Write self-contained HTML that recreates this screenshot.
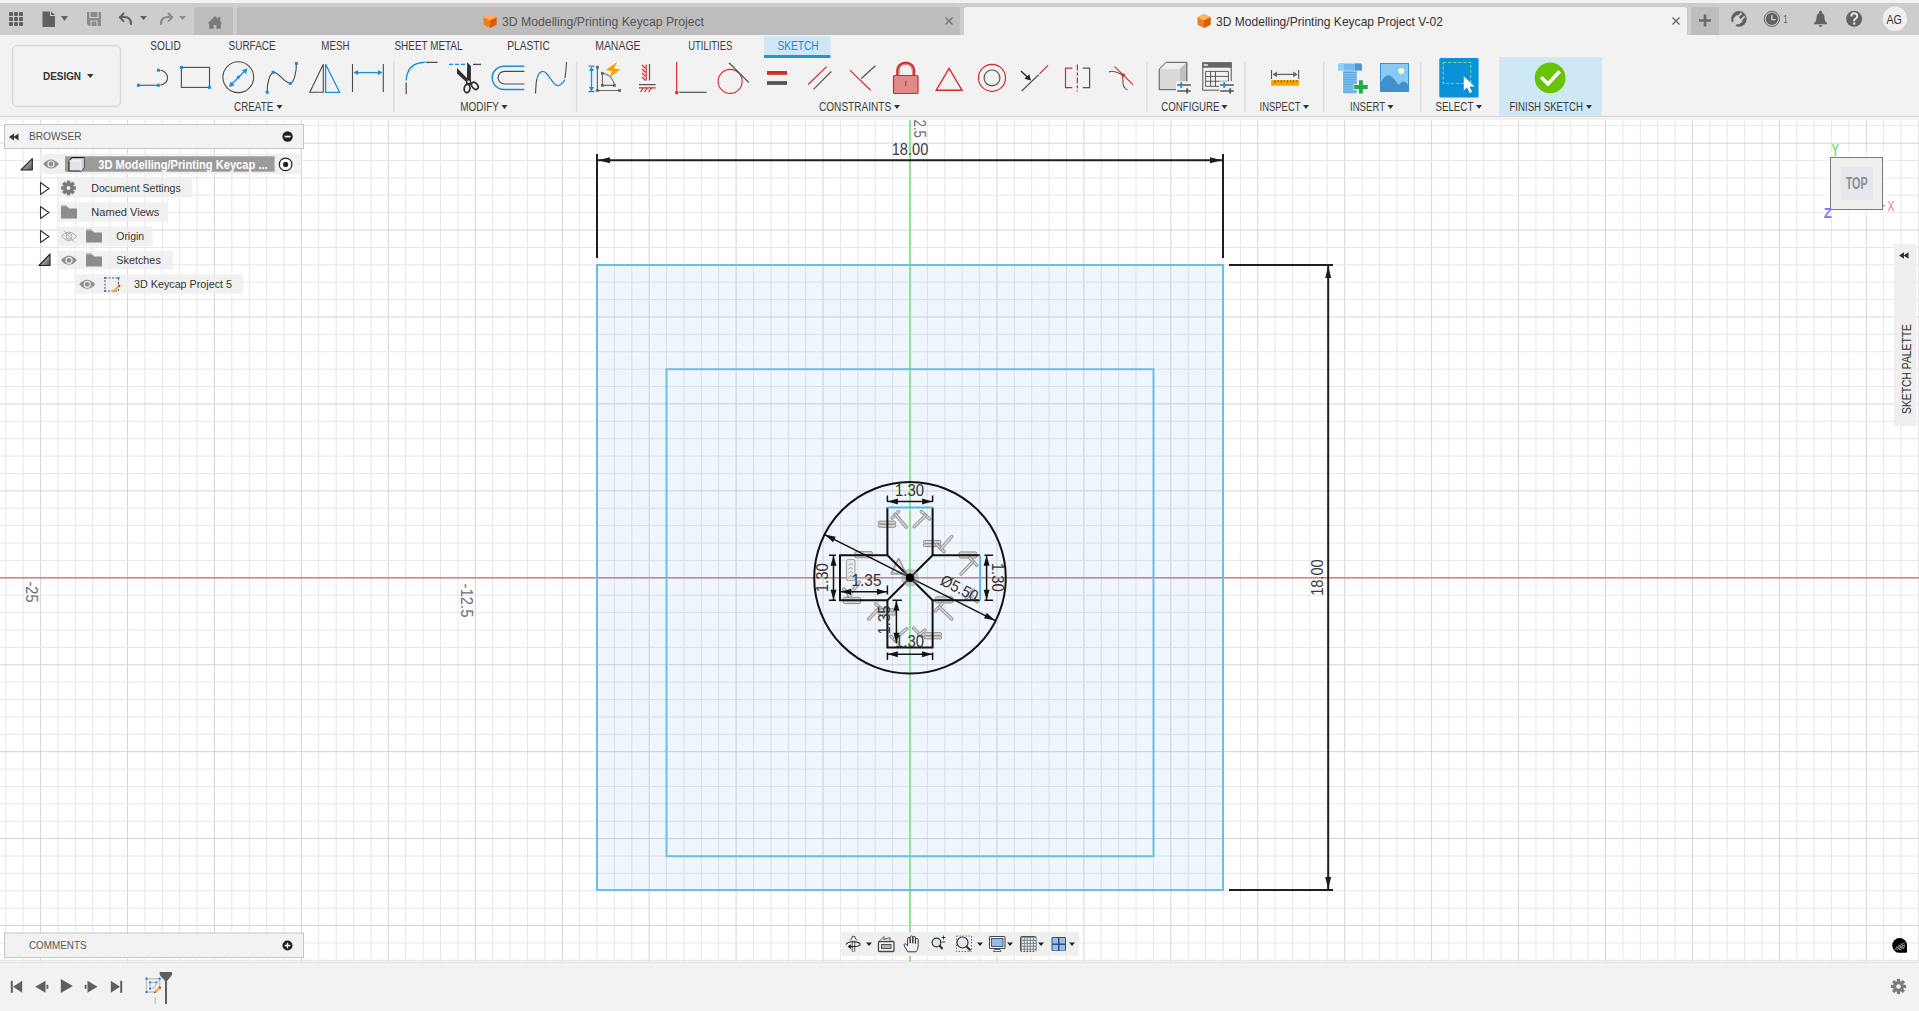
<!DOCTYPE html>
<html><head><meta charset="utf-8"><title>Fusion 360 - Sketch</title>
<style>html,body{margin:0;padding:0;width:1919px;height:1011px;overflow:hidden;background:#fff;font-family:'Liberation Sans', sans-serif}</style>
</head><body>
<svg width="1919" height="1011" viewBox="0 0 1919 1011" style="position:absolute;left:0;top:0;font-family:'Liberation Sans', sans-serif"><rect x="0" y="120" width="1919" height="842" fill="#ffffff"/>
<g><line x1="5.82" y1="120" x2="5.82" y2="962" stroke="#e6e6e6" stroke-width="1"/><line x1="23.21" y1="120" x2="23.21" y2="962" stroke="#e6e6e6" stroke-width="1"/><line x1="40.60" y1="120" x2="40.60" y2="962" stroke="#d4d4d4" stroke-width="1"/><line x1="57.99" y1="120" x2="57.99" y2="962" stroke="#e6e6e6" stroke-width="1"/><line x1="75.38" y1="120" x2="75.38" y2="962" stroke="#e6e6e6" stroke-width="1"/><line x1="92.76" y1="120" x2="92.76" y2="962" stroke="#e6e6e6" stroke-width="1"/><line x1="110.15" y1="120" x2="110.15" y2="962" stroke="#e6e6e6" stroke-width="1"/><line x1="127.54" y1="120" x2="127.54" y2="962" stroke="#d4d4d4" stroke-width="1"/><line x1="144.93" y1="120" x2="144.93" y2="962" stroke="#e6e6e6" stroke-width="1"/><line x1="162.32" y1="120" x2="162.32" y2="962" stroke="#e6e6e6" stroke-width="1"/><line x1="179.70" y1="120" x2="179.70" y2="962" stroke="#e6e6e6" stroke-width="1"/><line x1="197.09" y1="120" x2="197.09" y2="962" stroke="#e6e6e6" stroke-width="1"/><line x1="214.48" y1="120" x2="214.48" y2="962" stroke="#d4d4d4" stroke-width="1"/><line x1="231.87" y1="120" x2="231.87" y2="962" stroke="#e6e6e6" stroke-width="1"/><line x1="249.26" y1="120" x2="249.26" y2="962" stroke="#e6e6e6" stroke-width="1"/><line x1="266.64" y1="120" x2="266.64" y2="962" stroke="#e6e6e6" stroke-width="1"/><line x1="284.03" y1="120" x2="284.03" y2="962" stroke="#e6e6e6" stroke-width="1"/><line x1="301.42" y1="120" x2="301.42" y2="962" stroke="#d4d4d4" stroke-width="1"/><line x1="318.81" y1="120" x2="318.81" y2="962" stroke="#e6e6e6" stroke-width="1"/><line x1="336.20" y1="120" x2="336.20" y2="962" stroke="#e6e6e6" stroke-width="1"/><line x1="353.58" y1="120" x2="353.58" y2="962" stroke="#e6e6e6" stroke-width="1"/><line x1="370.97" y1="120" x2="370.97" y2="962" stroke="#e6e6e6" stroke-width="1"/><line x1="388.36" y1="120" x2="388.36" y2="962" stroke="#d4d4d4" stroke-width="1"/><line x1="405.75" y1="120" x2="405.75" y2="962" stroke="#e6e6e6" stroke-width="1"/><line x1="423.14" y1="120" x2="423.14" y2="962" stroke="#e6e6e6" stroke-width="1"/><line x1="440.52" y1="120" x2="440.52" y2="962" stroke="#e6e6e6" stroke-width="1"/><line x1="457.91" y1="120" x2="457.91" y2="962" stroke="#e6e6e6" stroke-width="1"/><line x1="475.30" y1="120" x2="475.30" y2="962" stroke="#d4d4d4" stroke-width="1"/><line x1="492.69" y1="120" x2="492.69" y2="962" stroke="#e6e6e6" stroke-width="1"/><line x1="510.08" y1="120" x2="510.08" y2="962" stroke="#e6e6e6" stroke-width="1"/><line x1="527.46" y1="120" x2="527.46" y2="962" stroke="#e6e6e6" stroke-width="1"/><line x1="544.85" y1="120" x2="544.85" y2="962" stroke="#e6e6e6" stroke-width="1"/><line x1="562.24" y1="120" x2="562.24" y2="962" stroke="#d4d4d4" stroke-width="1"/><line x1="579.63" y1="120" x2="579.63" y2="962" stroke="#e6e6e6" stroke-width="1"/><line x1="597.02" y1="120" x2="597.02" y2="962" stroke="#e6e6e6" stroke-width="1"/><line x1="614.40" y1="120" x2="614.40" y2="962" stroke="#e6e6e6" stroke-width="1"/><line x1="631.79" y1="120" x2="631.79" y2="962" stroke="#e6e6e6" stroke-width="1"/><line x1="649.18" y1="120" x2="649.18" y2="962" stroke="#d4d4d4" stroke-width="1"/><line x1="666.57" y1="120" x2="666.57" y2="962" stroke="#e6e6e6" stroke-width="1"/><line x1="683.96" y1="120" x2="683.96" y2="962" stroke="#e6e6e6" stroke-width="1"/><line x1="701.34" y1="120" x2="701.34" y2="962" stroke="#e6e6e6" stroke-width="1"/><line x1="718.73" y1="120" x2="718.73" y2="962" stroke="#e6e6e6" stroke-width="1"/><line x1="736.12" y1="120" x2="736.12" y2="962" stroke="#d4d4d4" stroke-width="1"/><line x1="753.51" y1="120" x2="753.51" y2="962" stroke="#e6e6e6" stroke-width="1"/><line x1="770.90" y1="120" x2="770.90" y2="962" stroke="#e6e6e6" stroke-width="1"/><line x1="788.28" y1="120" x2="788.28" y2="962" stroke="#e6e6e6" stroke-width="1"/><line x1="805.67" y1="120" x2="805.67" y2="962" stroke="#e6e6e6" stroke-width="1"/><line x1="823.06" y1="120" x2="823.06" y2="962" stroke="#d4d4d4" stroke-width="1"/><line x1="840.45" y1="120" x2="840.45" y2="962" stroke="#e6e6e6" stroke-width="1"/><line x1="857.84" y1="120" x2="857.84" y2="962" stroke="#e6e6e6" stroke-width="1"/><line x1="875.22" y1="120" x2="875.22" y2="962" stroke="#e6e6e6" stroke-width="1"/><line x1="892.61" y1="120" x2="892.61" y2="962" stroke="#e6e6e6" stroke-width="1"/><line x1="910.00" y1="120" x2="910.00" y2="962" stroke="#d4d4d4" stroke-width="1"/><line x1="927.39" y1="120" x2="927.39" y2="962" stroke="#e6e6e6" stroke-width="1"/><line x1="944.78" y1="120" x2="944.78" y2="962" stroke="#e6e6e6" stroke-width="1"/><line x1="962.16" y1="120" x2="962.16" y2="962" stroke="#e6e6e6" stroke-width="1"/><line x1="979.55" y1="120" x2="979.55" y2="962" stroke="#e6e6e6" stroke-width="1"/><line x1="996.94" y1="120" x2="996.94" y2="962" stroke="#d4d4d4" stroke-width="1"/><line x1="1014.33" y1="120" x2="1014.33" y2="962" stroke="#e6e6e6" stroke-width="1"/><line x1="1031.72" y1="120" x2="1031.72" y2="962" stroke="#e6e6e6" stroke-width="1"/><line x1="1049.10" y1="120" x2="1049.10" y2="962" stroke="#e6e6e6" stroke-width="1"/><line x1="1066.49" y1="120" x2="1066.49" y2="962" stroke="#e6e6e6" stroke-width="1"/><line x1="1083.88" y1="120" x2="1083.88" y2="962" stroke="#d4d4d4" stroke-width="1"/><line x1="1101.27" y1="120" x2="1101.27" y2="962" stroke="#e6e6e6" stroke-width="1"/><line x1="1118.66" y1="120" x2="1118.66" y2="962" stroke="#e6e6e6" stroke-width="1"/><line x1="1136.04" y1="120" x2="1136.04" y2="962" stroke="#e6e6e6" stroke-width="1"/><line x1="1153.43" y1="120" x2="1153.43" y2="962" stroke="#e6e6e6" stroke-width="1"/><line x1="1170.82" y1="120" x2="1170.82" y2="962" stroke="#d4d4d4" stroke-width="1"/><line x1="1188.21" y1="120" x2="1188.21" y2="962" stroke="#e6e6e6" stroke-width="1"/><line x1="1205.60" y1="120" x2="1205.60" y2="962" stroke="#e6e6e6" stroke-width="1"/><line x1="1222.98" y1="120" x2="1222.98" y2="962" stroke="#e6e6e6" stroke-width="1"/><line x1="1240.37" y1="120" x2="1240.37" y2="962" stroke="#e6e6e6" stroke-width="1"/><line x1="1257.76" y1="120" x2="1257.76" y2="962" stroke="#d4d4d4" stroke-width="1"/><line x1="1275.15" y1="120" x2="1275.15" y2="962" stroke="#e6e6e6" stroke-width="1"/><line x1="1292.54" y1="120" x2="1292.54" y2="962" stroke="#e6e6e6" stroke-width="1"/><line x1="1309.92" y1="120" x2="1309.92" y2="962" stroke="#e6e6e6" stroke-width="1"/><line x1="1327.31" y1="120" x2="1327.31" y2="962" stroke="#e6e6e6" stroke-width="1"/><line x1="1344.70" y1="120" x2="1344.70" y2="962" stroke="#d4d4d4" stroke-width="1"/><line x1="1362.09" y1="120" x2="1362.09" y2="962" stroke="#e6e6e6" stroke-width="1"/><line x1="1379.48" y1="120" x2="1379.48" y2="962" stroke="#e6e6e6" stroke-width="1"/><line x1="1396.86" y1="120" x2="1396.86" y2="962" stroke="#e6e6e6" stroke-width="1"/><line x1="1414.25" y1="120" x2="1414.25" y2="962" stroke="#e6e6e6" stroke-width="1"/><line x1="1431.64" y1="120" x2="1431.64" y2="962" stroke="#d4d4d4" stroke-width="1"/><line x1="1449.03" y1="120" x2="1449.03" y2="962" stroke="#e6e6e6" stroke-width="1"/><line x1="1466.42" y1="120" x2="1466.42" y2="962" stroke="#e6e6e6" stroke-width="1"/><line x1="1483.80" y1="120" x2="1483.80" y2="962" stroke="#e6e6e6" stroke-width="1"/><line x1="1501.19" y1="120" x2="1501.19" y2="962" stroke="#e6e6e6" stroke-width="1"/><line x1="1518.58" y1="120" x2="1518.58" y2="962" stroke="#d4d4d4" stroke-width="1"/><line x1="1535.97" y1="120" x2="1535.97" y2="962" stroke="#e6e6e6" stroke-width="1"/><line x1="1553.36" y1="120" x2="1553.36" y2="962" stroke="#e6e6e6" stroke-width="1"/><line x1="1570.74" y1="120" x2="1570.74" y2="962" stroke="#e6e6e6" stroke-width="1"/><line x1="1588.13" y1="120" x2="1588.13" y2="962" stroke="#e6e6e6" stroke-width="1"/><line x1="1605.52" y1="120" x2="1605.52" y2="962" stroke="#d4d4d4" stroke-width="1"/><line x1="1622.91" y1="120" x2="1622.91" y2="962" stroke="#e6e6e6" stroke-width="1"/><line x1="1640.30" y1="120" x2="1640.30" y2="962" stroke="#e6e6e6" stroke-width="1"/><line x1="1657.68" y1="120" x2="1657.68" y2="962" stroke="#e6e6e6" stroke-width="1"/><line x1="1675.07" y1="120" x2="1675.07" y2="962" stroke="#e6e6e6" stroke-width="1"/><line x1="1692.46" y1="120" x2="1692.46" y2="962" stroke="#d4d4d4" stroke-width="1"/><line x1="1709.85" y1="120" x2="1709.85" y2="962" stroke="#e6e6e6" stroke-width="1"/><line x1="1727.24" y1="120" x2="1727.24" y2="962" stroke="#e6e6e6" stroke-width="1"/><line x1="1744.62" y1="120" x2="1744.62" y2="962" stroke="#e6e6e6" stroke-width="1"/><line x1="1762.01" y1="120" x2="1762.01" y2="962" stroke="#e6e6e6" stroke-width="1"/><line x1="1779.40" y1="120" x2="1779.40" y2="962" stroke="#d4d4d4" stroke-width="1"/><line x1="1796.79" y1="120" x2="1796.79" y2="962" stroke="#e6e6e6" stroke-width="1"/><line x1="1814.18" y1="120" x2="1814.18" y2="962" stroke="#e6e6e6" stroke-width="1"/><line x1="1831.56" y1="120" x2="1831.56" y2="962" stroke="#e6e6e6" stroke-width="1"/><line x1="1848.95" y1="120" x2="1848.95" y2="962" stroke="#e6e6e6" stroke-width="1"/><line x1="1866.34" y1="120" x2="1866.34" y2="962" stroke="#d4d4d4" stroke-width="1"/><line x1="1883.73" y1="120" x2="1883.73" y2="962" stroke="#e6e6e6" stroke-width="1"/><line x1="1901.12" y1="120" x2="1901.12" y2="962" stroke="#e6e6e6" stroke-width="1"/><line x1="1918.50" y1="120" x2="1918.50" y2="962" stroke="#e6e6e6" stroke-width="1"/><line x1="0" y1="125.71" x2="1919" y2="125.71" stroke="#e6e6e6" stroke-width="1"/><line x1="0" y1="143.10" x2="1919" y2="143.10" stroke="#d4d4d4" stroke-width="1"/><line x1="0" y1="160.49" x2="1919" y2="160.49" stroke="#e6e6e6" stroke-width="1"/><line x1="0" y1="177.88" x2="1919" y2="177.88" stroke="#e6e6e6" stroke-width="1"/><line x1="0" y1="195.26" x2="1919" y2="195.26" stroke="#e6e6e6" stroke-width="1"/><line x1="0" y1="212.65" x2="1919" y2="212.65" stroke="#e6e6e6" stroke-width="1"/><line x1="0" y1="230.04" x2="1919" y2="230.04" stroke="#d4d4d4" stroke-width="1"/><line x1="0" y1="247.43" x2="1919" y2="247.43" stroke="#e6e6e6" stroke-width="1"/><line x1="0" y1="264.82" x2="1919" y2="264.82" stroke="#e6e6e6" stroke-width="1"/><line x1="0" y1="282.20" x2="1919" y2="282.20" stroke="#e6e6e6" stroke-width="1"/><line x1="0" y1="299.59" x2="1919" y2="299.59" stroke="#e6e6e6" stroke-width="1"/><line x1="0" y1="316.98" x2="1919" y2="316.98" stroke="#d4d4d4" stroke-width="1"/><line x1="0" y1="334.37" x2="1919" y2="334.37" stroke="#e6e6e6" stroke-width="1"/><line x1="0" y1="351.76" x2="1919" y2="351.76" stroke="#e6e6e6" stroke-width="1"/><line x1="0" y1="369.14" x2="1919" y2="369.14" stroke="#e6e6e6" stroke-width="1"/><line x1="0" y1="386.53" x2="1919" y2="386.53" stroke="#e6e6e6" stroke-width="1"/><line x1="0" y1="403.92" x2="1919" y2="403.92" stroke="#d4d4d4" stroke-width="1"/><line x1="0" y1="421.31" x2="1919" y2="421.31" stroke="#e6e6e6" stroke-width="1"/><line x1="0" y1="438.70" x2="1919" y2="438.70" stroke="#e6e6e6" stroke-width="1"/><line x1="0" y1="456.08" x2="1919" y2="456.08" stroke="#e6e6e6" stroke-width="1"/><line x1="0" y1="473.47" x2="1919" y2="473.47" stroke="#e6e6e6" stroke-width="1"/><line x1="0" y1="490.86" x2="1919" y2="490.86" stroke="#d4d4d4" stroke-width="1"/><line x1="0" y1="508.25" x2="1919" y2="508.25" stroke="#e6e6e6" stroke-width="1"/><line x1="0" y1="525.64" x2="1919" y2="525.64" stroke="#e6e6e6" stroke-width="1"/><line x1="0" y1="543.02" x2="1919" y2="543.02" stroke="#e6e6e6" stroke-width="1"/><line x1="0" y1="560.41" x2="1919" y2="560.41" stroke="#e6e6e6" stroke-width="1"/><line x1="0" y1="577.80" x2="1919" y2="577.80" stroke="#d4d4d4" stroke-width="1"/><line x1="0" y1="595.19" x2="1919" y2="595.19" stroke="#e6e6e6" stroke-width="1"/><line x1="0" y1="612.58" x2="1919" y2="612.58" stroke="#e6e6e6" stroke-width="1"/><line x1="0" y1="629.96" x2="1919" y2="629.96" stroke="#e6e6e6" stroke-width="1"/><line x1="0" y1="647.35" x2="1919" y2="647.35" stroke="#e6e6e6" stroke-width="1"/><line x1="0" y1="664.74" x2="1919" y2="664.74" stroke="#d4d4d4" stroke-width="1"/><line x1="0" y1="682.13" x2="1919" y2="682.13" stroke="#e6e6e6" stroke-width="1"/><line x1="0" y1="699.52" x2="1919" y2="699.52" stroke="#e6e6e6" stroke-width="1"/><line x1="0" y1="716.90" x2="1919" y2="716.90" stroke="#e6e6e6" stroke-width="1"/><line x1="0" y1="734.29" x2="1919" y2="734.29" stroke="#e6e6e6" stroke-width="1"/><line x1="0" y1="751.68" x2="1919" y2="751.68" stroke="#d4d4d4" stroke-width="1"/><line x1="0" y1="769.07" x2="1919" y2="769.07" stroke="#e6e6e6" stroke-width="1"/><line x1="0" y1="786.46" x2="1919" y2="786.46" stroke="#e6e6e6" stroke-width="1"/><line x1="0" y1="803.84" x2="1919" y2="803.84" stroke="#e6e6e6" stroke-width="1"/><line x1="0" y1="821.23" x2="1919" y2="821.23" stroke="#e6e6e6" stroke-width="1"/><line x1="0" y1="838.62" x2="1919" y2="838.62" stroke="#d4d4d4" stroke-width="1"/><line x1="0" y1="856.01" x2="1919" y2="856.01" stroke="#e6e6e6" stroke-width="1"/><line x1="0" y1="873.40" x2="1919" y2="873.40" stroke="#e6e6e6" stroke-width="1"/><line x1="0" y1="890.78" x2="1919" y2="890.78" stroke="#e6e6e6" stroke-width="1"/><line x1="0" y1="908.17" x2="1919" y2="908.17" stroke="#e6e6e6" stroke-width="1"/><line x1="0" y1="925.56" x2="1919" y2="925.56" stroke="#d4d4d4" stroke-width="1"/><line x1="0" y1="942.95" x2="1919" y2="942.95" stroke="#e6e6e6" stroke-width="1"/><line x1="0" y1="960.34" x2="1919" y2="960.34" stroke="#e6e6e6" stroke-width="1"/></g>
<line x1="0" y1="577.8" x2="1919" y2="577.8" stroke="#e27a7a" stroke-width="1.6"/>
<rect x="597" y="265" width="626" height="625" fill="rgb(80,160,230)" fill-opacity="0.09"/>
<line x1="910.0" y1="120" x2="910.0" y2="962" stroke="#90e393" stroke-width="2"/>
<rect x="597" y="265" width="626" height="625" fill="none" stroke="#6ebde6" stroke-width="2"/>
<rect x="666.5" y="369.2" width="487" height="487" fill="none" stroke="#6ebde6" stroke-width="2"/>
<path d="M597,154 V258 M1223,154 V258 M597,160.2 H1223" stroke="#1e1e1e" stroke-width="2" fill="none"/>
<path d="M598.00,160.20 L610.00,157.20 L610.00,163.20 Z" fill="#1e1e1e"/>
<path d="M1222.00,160.20 L1210.00,163.20 L1210.00,157.20 Z" fill="#1e1e1e"/>
<text x="910" y="154.6" font-size="16" fill="#3a3a3a" font-weight="normal" text-anchor="middle" textLength="36.5" lengthAdjust="spacingAndGlyphs" >18.00</text>
<path d="M1229,265 H1333 M1229,890 H1333 M1328.2,265 V890" stroke="#1e1e1e" stroke-width="2" fill="none"/>
<path d="M1328.20,266.00 L1331.20,278.00 L1325.20,278.00 Z" fill="#1e1e1e"/>
<path d="M1328.20,889.00 L1325.20,877.00 L1331.20,877.00 Z" fill="#1e1e1e"/>
<text x="0" y="0" font-size="16" fill="#3a3a3a" font-weight="normal" text-anchor="middle" textLength="36.5" lengthAdjust="spacingAndGlyphs" transform="translate(1322.5,577.6) rotate(-90)">18.00</text>
<text x="0" y="0" font-size="16.5" fill="#6e6e6e" font-weight="normal" text-anchor="start" textLength="21" lengthAdjust="spacingAndGlyphs" transform="translate(26,581.5) rotate(90)">-25</text>
<text x="0" y="0" font-size="16" fill="#6e6e6e" font-weight="normal" text-anchor="start" textLength="34" lengthAdjust="spacingAndGlyphs" transform="translate(461,583.5) rotate(90)">-12.5</text>
<text x="0" y="0" font-size="16" fill="#6e6e6e" font-weight="normal" text-anchor="start" textLength="18.5" lengthAdjust="spacingAndGlyphs" transform="translate(914,119.5) rotate(90)">2.5</text>
<rect x="878.35" y="521.1" width="17.5" height="3.0" rx="1.3" fill="#d2d2d2" stroke="#8e8e8e" stroke-width="1"/>
<rect x="878.35" y="524.3000000000001" width="17.5" height="3.0" rx="1.3" fill="#d2d2d2" stroke="#8e8e8e" stroke-width="1"/>
<path d="M892,518 L898.6,511.5" stroke="#969696" stroke-width="3.4" stroke-linecap="round"/>
<path d="M892,518 L898.6,511.5" stroke="#dedede" stroke-width="1.3" stroke-linecap="round"/>
<path d="M895.3,514.2 L906.2,527.2" stroke="#969696" stroke-width="3.4" stroke-linecap="round"/>
<path d="M895.3,514.2 L906.2,527.2" stroke="#dedede" stroke-width="1.3" stroke-linecap="round"/>
<path d="M921.3,511.5 L929.5,519.1" stroke="#969696" stroke-width="3.4" stroke-linecap="round"/>
<path d="M921.3,511.5 L929.5,519.1" stroke="#dedede" stroke-width="1.3" stroke-linecap="round"/>
<path d="M925.7,515.3 L914.2,526.7" stroke="#969696" stroke-width="3.4" stroke-linecap="round"/>
<path d="M925.7,515.3 L914.2,526.7" stroke="#dedede" stroke-width="1.3" stroke-linecap="round"/>
<rect x="923.45" y="540.4" width="17.5" height="3.0" rx="1.3" fill="#d2d2d2" stroke="#8e8e8e" stroke-width="1"/>
<rect x="923.45" y="543.6" width="17.5" height="3.0" rx="1.3" fill="#d2d2d2" stroke="#8e8e8e" stroke-width="1"/>
<path d="M936.6,544.6 L944.2,551.7" stroke="#969696" stroke-width="3.4" stroke-linecap="round"/>
<path d="M936.6,544.6 L944.2,551.7" stroke="#dedede" stroke-width="1.3" stroke-linecap="round"/>
<path d="M940.9,549 L951.8,536.5" stroke="#969696" stroke-width="3.4" stroke-linecap="round"/>
<path d="M940.9,549 L951.8,536.5" stroke="#dedede" stroke-width="1.3" stroke-linecap="round"/>
<rect x="959.15" y="551.9" width="17.5" height="3.0" rx="1.3" fill="#d2d2d2" stroke="#8e8e8e" stroke-width="1"/>
<rect x="959.15" y="555.1" width="17.5" height="3.0" rx="1.3" fill="#d2d2d2" stroke="#8e8e8e" stroke-width="1"/>
<path d="M969.7,557.7 L976.8,565.3" stroke="#969696" stroke-width="3.4" stroke-linecap="round"/>
<path d="M969.7,557.7 L976.8,565.3" stroke="#dedede" stroke-width="1.3" stroke-linecap="round"/>
<path d="M972.5,562 L961,574" stroke="#969696" stroke-width="3.4" stroke-linecap="round"/>
<path d="M972.5,562 L961,574" stroke="#dedede" stroke-width="1.3" stroke-linecap="round"/>
<rect x="854.95" y="551.6" width="17.5" height="3.0" rx="1.3" fill="#d2d2d2" stroke="#8e8e8e" stroke-width="1"/>
<rect x="854.95" y="554.8000000000001" width="17.5" height="3.0" rx="1.3" fill="#d2d2d2" stroke="#8e8e8e" stroke-width="1"/>
<rect x="846.5" y="559.5" width="8.5" height="21" rx="2" fill="#e4e4e4" fill-opacity="0.6" stroke="#a6a6a6" stroke-width="1.1"/>
<path d="M848.5,565 Q850.8,562 853,565" fill="none" stroke="#a6a6a6" stroke-width="1"/>
<path d="M848.5,569 Q850.8,566 853,569" fill="none" stroke="#a6a6a6" stroke-width="1"/>
<path d="M848.5,573 Q850.8,570 853,573" fill="none" stroke="#a6a6a6" stroke-width="1"/>
<path d="M848.5,577 Q850.8,574 853,577" fill="none" stroke="#a6a6a6" stroke-width="1"/>
<path d="M898.6,559 L891.5,573.5 H905.5 Z" fill="none" stroke="#a6a6a6" stroke-width="2.6" stroke-linejoin="round"/><path d="M898.6,561 L893.5,572 H903.5 Z" fill="none" stroke="#e4e4e4" stroke-width="1"/>
<rect x="843.25" y="597.4" width="17.5" height="3.0" rx="1.3" fill="#d2d2d2" stroke="#8e8e8e" stroke-width="1"/>
<rect x="843.25" y="600.6" width="17.5" height="3.0" rx="1.3" fill="#d2d2d2" stroke="#8e8e8e" stroke-width="1"/>
<path d="M848.5,596.1 L859.4,582" stroke="#969696" stroke-width="3.4" stroke-linecap="round"/>
<path d="M848.5,596.1 L859.4,582" stroke="#dedede" stroke-width="1.3" stroke-linecap="round"/>
<path d="M843.6,589 L850.7,596.7" stroke="#969696" stroke-width="3.4" stroke-linecap="round"/>
<path d="M843.6,589 L850.7,596.7" stroke="#dedede" stroke-width="1.3" stroke-linecap="round"/>
<path d="M875.7,603.7 L883.3,610.8" stroke="#969696" stroke-width="3.4" stroke-linecap="round"/>
<path d="M875.7,603.7 L883.3,610.8" stroke="#dedede" stroke-width="1.3" stroke-linecap="round"/>
<path d="M880,607.5 L868.7,619" stroke="#969696" stroke-width="3.4" stroke-linecap="round"/>
<path d="M880,607.5 L868.7,619" stroke="#dedede" stroke-width="1.3" stroke-linecap="round"/>
<rect x="878.45" y="608.8" width="17.5" height="3.0" rx="1.3" fill="#d2d2d2" stroke="#8e8e8e" stroke-width="1"/>
<rect x="878.45" y="612.0" width="17.5" height="3.0" rx="1.3" fill="#d2d2d2" stroke="#8e8e8e" stroke-width="1"/>
<path d="M891,636.4 L897.5,642.9" stroke="#969696" stroke-width="3.4" stroke-linecap="round"/>
<path d="M891,636.4 L897.5,642.9" stroke="#dedede" stroke-width="1.3" stroke-linecap="round"/>
<path d="M894.2,639.6 L906.7,628.8" stroke="#969696" stroke-width="3.4" stroke-linecap="round"/>
<path d="M894.2,639.6 L906.7,628.8" stroke="#dedede" stroke-width="1.3" stroke-linecap="round"/>
<rect x="935.45" y="596.8" width="17.5" height="3.0" rx="1.3" fill="#d2d2d2" stroke="#8e8e8e" stroke-width="1"/>
<rect x="935.45" y="600.0" width="17.5" height="3.0" rx="1.3" fill="#d2d2d2" stroke="#8e8e8e" stroke-width="1"/>
<path d="M935.5,610.8 L942.5,603.2" stroke="#969696" stroke-width="3.4" stroke-linecap="round"/>
<path d="M935.5,610.8 L942.5,603.2" stroke="#dedede" stroke-width="1.3" stroke-linecap="round"/>
<path d="M939.3,607 L951.8,619" stroke="#969696" stroke-width="3.4" stroke-linecap="round"/>
<path d="M939.3,607 L951.8,619" stroke="#dedede" stroke-width="1.3" stroke-linecap="round"/>
<rect x="924.05" y="632.6999999999999" width="17.5" height="3.0" rx="1.3" fill="#d2d2d2" stroke="#8e8e8e" stroke-width="1"/>
<rect x="924.05" y="635.9" width="17.5" height="3.0" rx="1.3" fill="#d2d2d2" stroke="#8e8e8e" stroke-width="1"/>
<path d="M913.6,628.2 L921.8,636.4" stroke="#969696" stroke-width="3.4" stroke-linecap="round"/>
<path d="M913.6,628.2 L921.8,636.4" stroke="#dedede" stroke-width="1.3" stroke-linecap="round"/>
<path d="M918.5,635.5 L925,630" stroke="#969696" stroke-width="3.4" stroke-linecap="round"/>
<path d="M918.5,635.5 L925,630" stroke="#dedede" stroke-width="1.3" stroke-linecap="round"/>
<path d="M970,594 L977,602" stroke="#969696" stroke-width="3.4" stroke-linecap="round"/>
<path d="M970,594 L977,602" stroke="#dedede" stroke-width="1.3" stroke-linecap="round"/>
<path d="M966,598 L973.5,590" stroke="#969696" stroke-width="3.4" stroke-linecap="round"/>
<path d="M966,598 L973.5,590" stroke="#dedede" stroke-width="1.3" stroke-linecap="round"/>
<circle cx="910.0" cy="577.8" r="95.8" fill="none" stroke="#121212" stroke-width="2"/>
<path d="M887.4,555.2 V507.6 M932.6,507.6 V555.2 H980.1 M980.1,600.3 H932.6 V647.5 H887.4 V600.3 H840 V555.2 H887.4" fill="none" stroke="#121212" stroke-width="2" stroke-linejoin="miter"/>
<path d="M887.4,507.6 H932.6 M980.1,555.2 V600.3" fill="none" stroke="#5ab8ea" stroke-width="2"/>
<path d="M887.4,555.2 L932.6,600.3 M932.6,555.2 L887.4,600.3" stroke="#121212" stroke-width="2"/>
<path d="M887.4,495.5 V502 M932.6,495.5 V502 M887.4,501.4 H932.6" fill="none" stroke="#121212" stroke-width="1.5"/>
<path d="M887.90,501.40 L897.90,498.40 L897.90,504.40 Z" fill="#121212"/>
<path d="M932.10,501.40 L922.10,504.40 L922.10,498.40 Z" fill="#121212"/>
<text x="909.5" y="495.5" font-size="16" fill="#333" font-weight="normal" text-anchor="middle" textLength="29" lengthAdjust="spacingAndGlyphs" >1.30</text>
<path d="M887.4,652.5 V660 M932.6,652.5 V660 M887.4,654.3 H932.6" fill="none" stroke="#121212" stroke-width="1.5"/>
<path d="M887.90,654.30 L897.90,651.30 L897.90,657.30 Z" fill="#121212"/>
<path d="M932.10,654.30 L922.10,657.30 L922.10,651.30 Z" fill="#121212"/>
<text x="909.5" y="647.4" font-size="16" fill="#333" font-weight="normal" text-anchor="middle" textLength="29" lengthAdjust="spacingAndGlyphs" >1.30</text>
<path d="M829,555.2 H836 M829,600.3 H836 M833.5,555.2 V600.3" fill="none" stroke="#121212" stroke-width="1.5"/>
<path d="M833.50,555.70 L836.50,565.70 L830.50,565.70 Z" fill="#121212"/>
<path d="M833.50,599.80 L830.50,589.80 L836.50,589.80 Z" fill="#121212"/>
<text x="0" y="0" font-size="16" fill="#333" font-weight="normal" text-anchor="middle" textLength="29" lengthAdjust="spacingAndGlyphs" transform="translate(828,577.8) rotate(-90)">1.30</text>
<path d="M984.5,555.2 H993 M984.5,600.3 H993 M986.6,555.2 V600.3" fill="none" stroke="#121212" stroke-width="1.5"/>
<path d="M986.60,555.70 L989.60,565.70 L983.60,565.70 Z" fill="#121212"/>
<path d="M986.60,599.80 L983.60,589.80 L989.60,589.80 Z" fill="#121212"/>
<text x="0" y="0" font-size="16" fill="#333" font-weight="normal" text-anchor="middle" textLength="29" lengthAdjust="spacingAndGlyphs" transform="translate(991.5,577.3) rotate(90)">1.30</text>
<path d="M887.4,585.5 V594.5 M840.5,591.8 H887.4" fill="none" stroke="#121212" stroke-width="1.5"/>
<path d="M841.00,591.80 L851.00,588.80 L851.00,594.80 Z" fill="#121212"/>
<path d="M886.90,591.80 L876.90,594.80 L876.90,588.80 Z" fill="#121212"/>
<text x="866.5" y="586" font-size="16" fill="#333" font-weight="normal" text-anchor="middle" textLength="30" lengthAdjust="spacingAndGlyphs" >1.35</text>
<path d="M892.5,600.3 H902 M896.4,600.3 V643" fill="none" stroke="#121212" stroke-width="1.5"/>
<path d="M896.40,600.80 L899.40,610.80 L893.40,610.80 Z" fill="#121212"/>
<path d="M896.40,642.80 L893.40,632.80 L899.40,632.80 Z" fill="#121212"/>
<text x="0" y="0" font-size="16" fill="#333" font-weight="normal" text-anchor="middle" textLength="29" lengthAdjust="spacingAndGlyphs" transform="translate(889.8,620) rotate(-90)">1.35</text>
<path d="M824.6,534.6 L995.2,620.6" stroke="#121212" stroke-width="1.5"/>
<path d="M824.60,534.60 L835.77,536.87 L833.07,542.23 Z" fill="#121212"/>
<path d="M995.20,620.60 L984.03,618.33 L986.73,612.97 Z" fill="#121212"/>
<text x="0" y="0" font-size="16" fill="#333" font-weight="normal" text-anchor="middle" textLength="40" lengthAdjust="spacingAndGlyphs" transform="translate(957,593) rotate(26.75)">Ø5.50</text>
<circle cx="910.0" cy="577.8" r="9" fill="#8a8a8a" fill-opacity="0.45"/><circle cx="910.0" cy="577.8" r="4.3" fill="#000"/>
<rect x="0" y="0" width="1919" height="3" fill="#f3f3f3"/>
<rect x="0" y="3" width="1919" height="32" fill="#cdcdcd"/>
<rect x="0" y="35" width="1919" height="81" fill="#f2f2f2"/>
<rect x="0" y="116" width="1919" height="4" fill="#f1f1f1"/><rect x="0" y="115.8" width="1919" height="1.2" fill="#d9d9d9"/>
<rect x="9" y="12" width="4" height="4" rx="0.8" fill="#616161"/>
<rect x="9" y="17" width="4" height="4" rx="0.8" fill="#616161"/>
<rect x="9" y="22" width="4" height="4" rx="0.8" fill="#616161"/>
<rect x="14" y="12" width="4" height="4" rx="0.8" fill="#616161"/>
<rect x="14" y="17" width="4" height="4" rx="0.8" fill="#616161"/>
<rect x="14" y="22" width="4" height="4" rx="0.8" fill="#616161"/>
<rect x="19" y="12" width="4" height="4" rx="0.8" fill="#616161"/>
<rect x="19" y="17" width="4" height="4" rx="0.8" fill="#616161"/>
<rect x="19" y="22" width="4" height="4" rx="0.8" fill="#616161"/>
<path d="M42.5,11.5 H50 V16 H55 V26.5 Q55,27 54.5,27 H43 Q42.5,27 42.5,26.5 Z" fill="#616161"/>
<path d="M51,11.5 L55,15 H51 Z" fill="#616161"/>
<path d="M61,16 H68 L64.5,21 Z" fill="#616161"/>
<path d="M87,12 H101 V26 H89 L87,24 Z" fill="#8a8a8a"/>
<path d="M90,12 V17.5 H98 V12" fill="none" stroke="#cdcdcd" stroke-width="1.2"/>
<path d="M91,26 V21 H97 V26" fill="none" stroke="#cdcdcd" stroke-width="1.2"/>
<path d="M131,24 Q131,17 124,17 H120" fill="none" stroke="#616161" stroke-width="2.2" stroke-linecap="round"/>
<path d="M123.5,13.5 L120,17.5 L123.5,21" fill="none" stroke="#616161" stroke-width="2" stroke-linecap="round" stroke-linejoin="round"/>
<path d="M140,16 H147 L143.5,20 Z" fill="#616161"/>
<path d="M161,24 Q161,17 168,17 H172" fill="none" stroke="#8c8c8c" stroke-width="2.2" stroke-linecap="round"/>
<path d="M168.5,13.5 L172,17.5 L168.5,21" fill="none" stroke="#8c8c8c" stroke-width="2" stroke-linecap="round" stroke-linejoin="round"/>
<path d="M179,16 H186 L182.5,20 Z" fill="#8c8c8c"/>
<path d="M194,35 V10 Q194,7 197,7 H230 Q233,7 233,10 V35 Z" fill="#bdbdbd"/>
<path d="M207.6,23.6 L215,16 L218.2,19.2 V17 H220.2 V21.2 L222.4,23.6 H220.8 V28.8 H216.4 V25 H213.6 V28.8 H209.2 V23.6 Z" fill="#7a7a7a"/>
<path d="M237,35 V10 Q237,7 240,7 H957 Q960,7 960,10 V35 Z" fill="#bdbdbd"/>
<g transform="translate(483,14) scale(1.0)"><path d="M7,0 L13.5,3.2 V10.8 L7,14 L0.5,10.8 V3.2 Z" fill="#f07f1a"/><path d="M7,0 L13.5,3.2 L7,6.4 L0.5,3.2 Z" fill="#ffb060"/><path d="M7,6.4 L13.5,3.2 V10.8 L7,14 Z" fill="#d85f08"/></g>
<text x="502" y="25.5" font-size="12.5" fill="#555" font-weight="normal" text-anchor="start" textLength="202" lengthAdjust="spacingAndGlyphs" >3D Modelling/Printing Keycap Project</text>
<path d="M945.5,17.5 L952.5,24.5 M952.5,17.5 L945.5,24.5" stroke="#707070" stroke-width="1.3"/>
<path d="M964,35 V10 Q964,7 967,7 H1684 Q1687,7 1687,10 V35 Z" fill="#f2f2f2"/>
<g transform="translate(1197,14) scale(1.0)"><path d="M7,0 L13.5,3.2 V10.8 L7,14 L0.5,10.8 V3.2 Z" fill="#f07f1a"/><path d="M7,0 L13.5,3.2 L7,6.4 L0.5,3.2 Z" fill="#ffb060"/><path d="M7,6.4 L13.5,3.2 V10.8 L7,14 Z" fill="#d85f08"/></g>
<text x="1216" y="25.5" font-size="12.5" fill="#333" font-weight="normal" text-anchor="start" textLength="227" lengthAdjust="spacingAndGlyphs" >3D Modelling/Printing Keycap Project V-02</text>
<path d="M1672.5,17.5 L1679.5,24.5 M1679.5,17.5 L1672.5,24.5" stroke="#606060" stroke-width="1.3"/>
<path d="M1691,35 V10 Q1691,7 1694,7 H1716 Q1719,7 1719,10 V35 Z" fill="#bdbdbd"/>
<path d="M1699,20.5 H1711 M1705,14.5 V26.5" stroke="#6a6a6a" stroke-width="2.6"/>
<circle cx="1738.9" cy="18.9" r="7.8" fill="#616161"/>
<g transform="translate(1738.9 18.9) rotate(45)"><path d="M-4.2,-1.2 H4.2 V2 Q4.2,5.2 1,5.2 H-1 Q-4.2,5.2 -4.2,2 Z" fill="#d2d2d2"/><rect x="-3.2" y="-6" width="1.8" height="5" fill="#d2d2d2"/><rect x="1.4" y="-6" width="1.8" height="5" fill="#d2d2d2"/><rect x="-2.3" y="4" width="4.6" height="5" fill="#cdcdcd"/><rect x="-3.5" y="1.2" width="7" height="2.5" fill="#d2d2d2"/></g>
<circle cx="1738.9" cy="18.9" r="5.2" fill="none" stroke="#d2d2d2" stroke-width="0.01"/>
<circle cx="1771.9" cy="18.9" r="7.6" fill="none" stroke="#616161" stroke-width="1"/><circle cx="1771.9" cy="18.9" r="6.1" fill="#616161"/>
<path d="M1771.9,15 V19.6 H1775.8" fill="none" stroke="#d6d6d6" stroke-width="1.3"/>
<text x="1783.6" y="22.8" font-size="11" fill="#555" font-weight="normal" text-anchor="start" textLength="4" lengthAdjust="spacingAndGlyphs" >1</text>
<circle cx="1820.5" cy="12.2" r="1.4" fill="#616161"/><path d="M1814,24.3 V23 Q1816.5,21.5 1816.5,17.5 Q1816.5,13 1820.5,13 Q1824.5,13 1824.5,17.5 Q1824.5,21.5 1827,23 V24.3 Z" fill="#616161"/><path d="M1818.3,25.2 H1822.7 Q1822,26.9 1820.5,26.9 Q1819,26.9 1818.3,25.2 Z" fill="#616161"/>
<circle cx="1854.1" cy="18.8" r="8" fill="#616161"/>
<path d="M1851.3,16.6 Q1851.3,13.2 1854.2,13.2 Q1857.2,13.2 1857.2,16.2 Q1857.2,17.9 1855.3,18.8 Q1854.2,19.4 1854.2,20.8 V21.3" fill="none" stroke="#e6e6e6" stroke-width="2"/><rect x="1853.1" y="22.4" width="2.2" height="2.2" fill="#e6e6e6"/>
<circle cx="1894.9" cy="18.8" r="12.2" fill="#efefef"/>
<text x="1894.2" y="24" font-size="12.5" fill="#333" font-weight="normal" text-anchor="middle" textLength="15.3" lengthAdjust="spacingAndGlyphs" >AG</text>
<rect x="12.5" y="45.5" width="108" height="61" rx="5" fill="#f2f2f2" stroke="#d9d9d9" stroke-width="1.5"/>
<text x="43" y="79.9" font-size="11.8" fill="#333" font-weight="bold" text-anchor="start" textLength="38" lengthAdjust="spacingAndGlyphs" >DESIGN</text>
<path d="M87,74 H93.5 L90.25,78 Z" fill="#333"/>
<rect x="764" y="36" width="66.5" height="22" fill="#cfe7f5"/>
<rect x="764" y="55" width="66.5" height="3" fill="#1e96d9"/>
<text x="150.3" y="50.3" font-size="12" fill="#3c3c3c" font-weight="normal" text-anchor="start" textLength="30.4" lengthAdjust="spacingAndGlyphs" >SOLID</text>
<text x="228.6" y="50.3" font-size="12" fill="#3c3c3c" font-weight="normal" text-anchor="start" textLength="47.0" lengthAdjust="spacingAndGlyphs" >SURFACE</text>
<text x="321.3" y="50.3" font-size="12" fill="#3c3c3c" font-weight="normal" text-anchor="start" textLength="28.2" lengthAdjust="spacingAndGlyphs" >MESH</text>
<text x="394.5" y="50.3" font-size="12" fill="#3c3c3c" font-weight="normal" text-anchor="start" textLength="68.0" lengthAdjust="spacingAndGlyphs" >SHEET METAL</text>
<text x="507.2" y="50.3" font-size="12" fill="#3c3c3c" font-weight="normal" text-anchor="start" textLength="42.6" lengthAdjust="spacingAndGlyphs" >PLASTIC</text>
<text x="595.2" y="50.3" font-size="12" fill="#3c3c3c" font-weight="normal" text-anchor="start" textLength="45.3" lengthAdjust="spacingAndGlyphs" >MANAGE</text>
<text x="688.2" y="50.3" font-size="12" fill="#3c3c3c" font-weight="normal" text-anchor="start" textLength="44.1" lengthAdjust="spacingAndGlyphs" >UTILITIES</text>
<text x="777.4" y="50.3" font-size="12" fill="#1a8ad4" font-weight="normal" text-anchor="start" textLength="41.3" lengthAdjust="spacingAndGlyphs" >SKETCH</text>
<text x="234.1" y="111.2" font-size="12" fill="#3c3c3c" font-weight="normal" text-anchor="start" textLength="39.1" lengthAdjust="spacingAndGlyphs" >CREATE</text>
<path d="M276.5,105 H282.5 L279.5,109 Z" fill="#333"/>
<text x="460.2" y="111.2" font-size="12" fill="#3c3c3c" font-weight="normal" text-anchor="start" textLength="38.7" lengthAdjust="spacingAndGlyphs" >MODIFY</text>
<path d="M501.5,105 H507.5 L504.5,109 Z" fill="#333"/>
<text x="819" y="111.2" font-size="12" fill="#3c3c3c" font-weight="normal" text-anchor="start" textLength="72.2" lengthAdjust="spacingAndGlyphs" >CONSTRAINTS</text>
<path d="M894,105 H900 L897,109 Z" fill="#333"/>
<text x="1161.3" y="111.2" font-size="12" fill="#3c3c3c" font-weight="normal" text-anchor="start" textLength="58.2" lengthAdjust="spacingAndGlyphs" >CONFIGURE</text>
<path d="M1221.5,105 H1227.5 L1224.5,109 Z" fill="#333"/>
<text x="1259.5" y="111.2" font-size="12" fill="#3c3c3c" font-weight="normal" text-anchor="start" textLength="41.0" lengthAdjust="spacingAndGlyphs" >INSPECT</text>
<path d="M1303,105 H1309 L1306,109 Z" fill="#333"/>
<text x="1350" y="111.2" font-size="12" fill="#3c3c3c" font-weight="normal" text-anchor="start" textLength="35.1" lengthAdjust="spacingAndGlyphs" >INSERT</text>
<path d="M1387.5,105 H1393.5 L1390.5,109 Z" fill="#333"/>
<text x="1435.4" y="111.2" font-size="12" fill="#3c3c3c" font-weight="normal" text-anchor="start" textLength="38.0" lengthAdjust="spacingAndGlyphs" >SELECT</text>
<path d="M1476,105 H1482 L1479,109 Z" fill="#333"/>
<rect x="393.05" y="61.5" width="1.5" height="50.5" fill="#dcdcdc"/>
<rect x="575.85" y="61.5" width="1.5" height="50.5" fill="#dcdcdc"/>
<rect x="1146.05" y="61.5" width="1.5" height="50.5" fill="#dcdcdc"/>
<rect x="1244.25" y="61.5" width="1.5" height="50.5" fill="#dcdcdc"/>
<rect x="1322.95" y="61.5" width="1.5" height="50.5" fill="#dcdcdc"/>
<rect x="1420.05" y="61.5" width="1.5" height="50.5" fill="#dcdcdc"/>
<rect x="1499" y="57" width="103" height="59" fill="#cfe8f5"/>
<text x="1509.4" y="111.2" font-size="12" fill="#3c3c3c" font-weight="normal" text-anchor="start" textLength="73.5" lengthAdjust="spacingAndGlyphs" >FINISH SKETCH</text>
<path d="M1586,105 H1592 L1589,109 Z" fill="#333"/>
<path d="M139,85.3 H157 M160.5,70.3 A8,7.5 0 0 1 160.5,85.2" fill="none" stroke="#4a4a4a" stroke-width="1.1"/>
<rect x="136.9" y="83.8" width="3" height="3" fill="#1a8de0"/>
<rect x="156.9" y="83.8" width="3" height="3" fill="#1a8de0"/>
<rect x="156.9" y="68.7" width="3" height="3" fill="#1a8de0"/>
<rect x="181.4" y="67.4" width="28.1" height="20" fill="none" stroke="#4a4a4a" stroke-width="1.1"/>
<rect x="179.9" y="65.9" width="3" height="3" fill="#1a8de0"/>
<rect x="208.0" y="85.9" width="3" height="3" fill="#1a8de0"/>
<circle cx="238.3" cy="77.2" r="15.4" fill="none" stroke="#4a4a4a" stroke-width="1.1"/>
<path d="M230.5,85.5 L246.5,69.3" stroke="#1a8de0" stroke-width="1.3"/>
<path d="M229,87 L230.5,81.5 L234.5,85.5 Z M247.5,68.4 L246,74 L242,70 Z" fill="#1a8de0"/>
<rect x="236.9" y="75.8" width="2.8" height="2.8" fill="#1a8de0"/>
<path d="M267.2,91.5 C267,82 270,74 273.2,72.3 C279,72 284,83 290.4,83.4 C294,83 296.5,72 296.4,63.4" fill="none" stroke="#4a4a4a" stroke-width="1.1"/>
<rect x="265.7" y="90.8" width="3" height="3" fill="#1a8de0"/>
<rect x="271.7" y="70.8" width="3" height="3" fill="#1a8de0"/>
<rect x="288.9" y="81.9" width="3" height="3" fill="#1a8de0"/>
<rect x="294.9" y="61.9" width="3" height="3" fill="#1a8de0"/>
<path d="M309.8,92.3 L323.3,64.3 V92.3 Z" fill="none" stroke="#4a4a4a" stroke-width="1.1"/>
<path d="M325.6,64.3 V92.3 H339.6 Z" fill="none" stroke="#1a8de0" stroke-width="1.3"/>
<path d="M352.5,64.1 V92 M383.3,64.1 V92" stroke="#4a4a4a" stroke-width="1.1"/>
<path d="M355,72.6 H381" stroke="#1a8de0" stroke-width="1.3"/><path d="M353.5,72.6 L358,70 V75.2 Z M382.5,72.6 L378,70 V75.2 Z" fill="#1a8de0"/>
<path d="M406.2,80.5 Q407,63 424.9,62.3" fill="none" stroke="#1a8de0" stroke-width="1.4"/>
<path d="M426,62.3 H437.7 M406.2,82.5 V94" stroke="#4a4a4a" stroke-width="1.2"/>
<path d="M449,64.4 H465.2" stroke="#1a8de0" stroke-width="1.4" stroke-dasharray="4.1,1.9"/><path d="M473,64.4 H481" stroke="#4a4a4a" stroke-width="1.3"/>
<path d="M467.2,62.2 L470.9,66.1 V81.3 L466.9,80.2 Z" fill="#2e2e2e"/><path d="M457,68.1 V73.6 L466.3,82.1 L467.3,78.6 Z" fill="#2e2e2e"/><path d="M465.8,80.5 L470.9,79.5 L471.5,85 L466,84.5 Z" fill="#2e2e2e"/><circle cx="468.6" cy="81.7" r="1.3" fill="#f2f2f2"/>
<ellipse cx="467.1" cy="88.5" rx="2.9" ry="4.2" fill="none" stroke="#2e2e2e" stroke-width="1.7" transform="rotate(8 467.1 88.5)"/><ellipse cx="474.8" cy="85.8" rx="2.7" ry="4" fill="none" stroke="#2e2e2e" stroke-width="1.7" transform="rotate(-40 474.8 85.8)"/>
<path d="M524.3,66.2 H504 A11.8,11.6 0 0 0 504,89.4 H524.3" fill="none" stroke="#1a8de0" stroke-width="1.5"/>
<path d="M524.3,71.3 H504.5 A6.4,6.35 0 0 0 504.5,84 H524.3" fill="none" stroke="#4a4a4a" stroke-width="1.2"/>
<path d="M535.5,93.5 Q536,82 537,78.5" fill="none" stroke="#4a4a4a" stroke-width="1.1"/>
<path d="M537,78.5 C539,71 543,70 546,73 C551,78 555,88 560,85 C562,84 564,82 564.9,79.6" fill="none" stroke="#1a8de0" stroke-width="1.3"/>
<path d="M564.9,78 Q566,72 566.5,62" fill="none" stroke="#4a4a4a" stroke-width="1.1"/>
<path d="M591.5,67 V91" stroke="#1a8de0" stroke-width="1.3"/><path d="M588.5,66.2 H594.5 M588.5,91.5 H594.5" stroke="#1a8de0" stroke-width="1.3"/><path d="M591.5,67 L589,71 H594 Z M591.5,91 L589,87 H594 Z" fill="#1a8de0"/>
<path d="M597.4,67 V90.5 H619.6" fill="none" stroke="#666" stroke-width="1.2"/>
<rect x="596.0" y="65.89999999999999" width="2.8" height="2.8" fill="#666"/>
<rect x="596.0" y="89.1" width="2.8" height="2.8" fill="#666"/>
<rect x="618.2" y="89.1" width="2.8" height="2.8" fill="#666"/>
<path d="M602.4,73.3 V85.4 H614.4 M602.4,73.3 Q611,74 614.4,84" fill="none" stroke="#666" stroke-width="1.1"/>
<rect x="601.0" y="71.89999999999999" width="2.8" height="2.8" fill="#666"/>
<rect x="601.0" y="84.0" width="2.8" height="2.8" fill="#666"/>
<rect x="613.0" y="84.0" width="2.8" height="2.8" fill="#666"/>
<path d="M617,62 L605.8,69.9 L612.2,71.2 L609,77.8 L620.7,69.6 L614,68.4 Z" fill="#f5a300"/>
<path d="M642,65 L645.5,68.5 M642,69 L645.5,72.5 M642,73 L645.5,76.5 M642,77 L645.5,80.5" stroke="#d42a2a" stroke-width="1.2" fill="none"/>
<path d="M646.2,64.5 V80.5" stroke="#d42a2a" stroke-width="1.2"/>
<path d="M649.5,64 V80.5 M639,84.6 H655.7" stroke="#555" stroke-width="1.2"/>
<path d="M639,87.8 H655.7 M640.5,91.8 L643.5,88 M644.5,91.8 L647.5,88 M648.5,91.8 L651.5,88" stroke="#d42a2a" stroke-width="1.2" fill="none"/>
<path d="M676.7,62 V91" stroke="#d42a2a" stroke-width="1.2"/><rect x="675.2" y="91.1" width="3" height="3" fill="#d42a2a"/>
<path d="M679.2,92.3 H706.7" stroke="#555" stroke-width="1.2"/>
<circle cx="730.2" cy="81.4" r="12" fill="none" stroke="#d42a2a" stroke-width="1.1"/><path d="M729,62.8 L748.8,82.5" stroke="#555" stroke-width="1.2"/>
<rect x="767" y="71" width="20" height="3.8" fill="#d42a2a"/><rect x="767" y="81.1" width="20" height="3.8" fill="#555"/>
<path d="M808.2,84.5 L826.6,66.6" stroke="#d42a2a" stroke-width="1.2"/><path d="M813.5,89.3 L831.3,71.5" stroke="#555" stroke-width="1.2"/>
<path d="M850,70.4 L870.7,90.3" stroke="#d42a2a" stroke-width="1.2"/><path d="M861.3,78.5 L875.4,65.7" stroke="#555" stroke-width="1.2"/>
<path d="M897.8,75.5 V70.5 A7.9,7.5 0 0 1 913.6,70.5 V75.5" fill="none" stroke="#d42a2a" stroke-width="3.2"/><path d="M898.8,75.5 V70.5 A6.9,6.5 0 0 1 912.6,70.5 V75.5" fill="none" stroke="#e08a8a" stroke-width="1.2"/>
<rect x="893.5" y="75.5" width="24.5" height="18" rx="1" fill="#e08a8a" stroke="#d42a2a" stroke-width="1.2"/><path d="M905.7,81 V86" stroke="#d42a2a" stroke-width="1.2"/>
<path d="M949.1,68.3 L936.2,90.2 H962 Z" fill="none" stroke="#d42a2a" stroke-width="1.4" stroke-linejoin="miter"/>
<circle cx="992" cy="77.9" r="13.5" fill="none" stroke="#d42a2a" stroke-width="1.2"/><circle cx="992" cy="77.9" r="7.9" fill="none" stroke="#555" stroke-width="1.2"/>
<path d="M1021.7,91 L1038.6,74.7" stroke="#555" stroke-width="1.2"/><path d="M1039.5,73.8 L1048,65.3" stroke="#d42a2a" stroke-width="1.2"/>
<path d="M1021,71 L1027.5,77.2" stroke="#222" stroke-width="1.2"/><path d="M1031,80.5 L1024.5,78.8 L1029.2,74.2 Z" fill="#222"/>
<path d="M1072.3,68.2 H1065.5 V87.7 H1072.3" fill="none" stroke="#d42a2a" stroke-width="1.2"/><path d="M1082.7,68.2 H1089.6 V87.7 H1082.7" fill="none" stroke="#555" stroke-width="1.2"/>
<path d="M1077.4,64.4 V91.6" stroke="#d42a2a" stroke-width="1.2" stroke-dasharray="6,2,3,2"/>
<path d="M1114.6,66.6 L1133,84.6" stroke="#d42a2a" stroke-width="1.2"/>
<path d="M1109,71.9 C1113,70 1117,72 1121,74 C1125,77 1121,84 1124.5,87.5 Q1126,89.5 1127.7,89.7" fill="none" stroke="#555" stroke-width="1.1"/>
<rect x="1122" y="73.7" width="2.8" height="2.8" fill="#d42a2a"/>
<path d="M1159.2,69.1 L1166.2,62.3 H1186.9 V89.7 H1159.2 Z" fill="#d9d9d9"/>
<path d="M1159.2,69.1 L1166.2,62.3 H1186.9 L1180,69.1 Z" fill="#f0f0f0"/><path d="M1180,69.1 L1186.9,62.3 V89.7 H1180 Z" fill="#bfbfbf"/>
<path d="M1159.2,89.7 V69.1 L1166.2,62.3 H1186.9 V89.7 Z" fill="none" stroke="#555" stroke-width="1"/>
<rect x="1176.0" y="81.3" width="16.5" height="13" fill="#f2f2f2"/>
<path d="M1177.2,85.0 H1190.8 M1177.2,91.1 H1190.8" stroke="#555" stroke-width="1.5"/>
<rect x="1180.3" y="82.2" width="1.9" height="5.7" fill="#1a8de0"/><rect x="1186.2" y="88.3" width="1.9" height="5.2" fill="#555"/>
<rect x="1202.8" y="62.8" width="28.4" height="27.4" fill="#f2f2f2" stroke="#555" stroke-width="1"/><rect x="1202.3" y="62.3" width="29.4" height="5.4" fill="#666"/><rect x="1203.8" y="64.2" width="4" height="1.6" fill="#eee"/>
<path d="M1205.6,71.4 H1228.4 V86.3 H1205.6 Z M1205.6,76.4 H1228.4 M1205.6,81.3 H1228.4 M1210.6,71.4 V86.3 M1215.5,71.4 V86.3" fill="none" stroke="#555" stroke-width="0.95"/>
<rect x="1219.0" y="81.3" width="16.5" height="13" fill="#f2f2f2"/>
<path d="M1220.2,85.0 H1233.8 M1220.2,91.1 H1233.8" stroke="#555" stroke-width="1.5"/>
<rect x="1223.3" y="82.2" width="1.9" height="5.7" fill="#1a8de0"/><rect x="1229.2" y="88.3" width="1.9" height="5.2" fill="#555"/>
<path d="M1271.5,70 V79 M1298.7,70 V79" stroke="#555" stroke-width="1.1"/><path d="M1274,74.4 H1296" stroke="#666" stroke-width="1.3"/><path d="M1272.5,74.4 L1277,71.6 V77.2 Z M1297.7,74.4 L1293.2,71.6 V77.2 Z" fill="#666"/>
<rect x="1271.2" y="80.1" width="27.8" height="5.6" fill="#f5a300"/>
<path d="M1275.20,80.1 V83 M1278.25,80.1 V81.9 M1281.30,80.1 V83 M1284.35,80.1 V81.9 M1287.40,80.1 V83 M1290.45,80.1 V81.9 M1293.50,80.1 V83 M1296.55,80.1 V81.9 " stroke="#7a5200" stroke-width="0.8"/>
<path d="M1338,65 Q1338,63.5 1339.5,63.5 H1360.4 Q1361.9,63.5 1361.9,65 V70.5 H1338 Z" fill="#72bdf0"/><path d="M1338,65 Q1338,63.5 1339.5,63.5 H1344 V70.5 H1338 Z" fill="#8fd0fa"/><path d="M1355,63.5 H1360.4 Q1361.9,63.5 1361.9,65 V70.5 H1355 Z" fill="#4a98d4"/>
<rect x="1343.1" y="70.5" width="13.7" height="23" rx="1.5" fill="#7ec1ef"/>
<path d="M1343.1,72.50 H1356.8 M1343.1,74.90 H1356.8 M1343.1,77.30 H1356.8 M1343.1,79.70 H1356.8 M1343.1,82.10 H1356.8 M1343.1,84.50 H1356.8 M1343.1,86.90 H1356.8 M1343.1,89.30 H1356.8 M1343.1,91.70 H1356.8 " stroke="#5aa2da" stroke-width="0.9"/>
<path d="M1353.6,87 H1368.2 M1360.9,79.8 V94" stroke="#f2f2f2" stroke-width="6.2"/><path d="M1354.1,87 H1367.7 M1360.9,80.3 V93.5" stroke="#22aa48" stroke-width="3.9"/>
<rect x="1380" y="63" width="29" height="29" fill="#3e8fce"/><rect x="1381" y="64" width="27" height="27" fill="#86cbf6"/>
<path d="M1381,82 Q1384.5,75.2 1388.4,75.2 Q1392,75.2 1398.6,85 Q1401,81.4 1403.3,81.4 Q1406,81.4 1408,84.5 V91 H1381 Z" fill="#3f90cc"/><circle cx="1401.3" cy="71" r="2.9" fill="#fffac0"/>
<rect x="1439.3" y="58.1" width="39.3" height="39.3" rx="1.5" fill="#0a92d8"/>
<rect x="1443.3" y="62.5" width="27.5" height="21" fill="none" stroke="#7ee07e" stroke-width="1.1" stroke-dasharray="3,2"/>
<path d="M1463.8,76.2 V90.5 L1467,87.5 L1469.8,93 L1472,92 L1469.5,86.5 L1474.5,86.5 Z" fill="#fff"/>
<circle cx="1550.1" cy="77.9" r="15.4" fill="#66c500"/>
<path d="M1542.5,78.5 L1548,84 L1558.5,72.5" fill="none" stroke="#fff" stroke-width="3.6" stroke-linecap="square"/>
<rect x="4.5" y="124.5" width="299" height="24" fill="#f2f2f2" stroke="#c6c6c6" stroke-width="1"/>
<path d="M9,137 L14,133.5 V140.5 Z M13.5,137 L18.5,133.5 V140.5 Z" fill="#333"/>
<text x="29" y="140.3" font-size="11.5" fill="#555" font-weight="normal" text-anchor="start" textLength="52.5" lengthAdjust="spacingAndGlyphs" >BROWSER</text>
<circle cx="287.6" cy="136.5" r="5.2" fill="#1e1e1e"/><rect x="284.6" y="135.7" width="6" height="1.7" fill="#fff"/>
<rect x="39.6" y="154" width="260.9" height="20" fill="#eeeeee" fill-opacity="0.85"/>
<rect x="57.4" y="178.1" width="134.79999999999998" height="19.400000000000006" fill="#eeeeee" fill-opacity="0.85"/>
<rect x="57.4" y="202.3" width="110.6" height="19.399999999999977" fill="#eeeeee" fill-opacity="0.85"/>
<rect x="57.4" y="226.6" width="95.29999999999998" height="19.400000000000006" fill="#eeeeee" fill-opacity="0.85"/>
<rect x="57.4" y="250.8" width="115.5" height="18.599999999999966" fill="#eeeeee" fill-opacity="0.85"/>
<rect x="75.1" y="274.2" width="168.0" height="19.400000000000034" fill="#eeeeee" fill-opacity="0.85"/>
<defs><linearGradient id="tri" x1="0" y1="0" x2="1" y2="1"><stop offset="0" stop-color="#e8e8e8"/><stop offset="1" stop-color="#555"/></linearGradient></defs>
<path d="M21,170 L32.3,158.7 V170 Z" fill="url(#tri)" stroke="#222" stroke-width="1.1" stroke-linejoin="round"/>
<path d="M43,164 Q51,155 59,164 Q51,173 43,164 Z" fill="#8f8f8f"/><circle cx="51" cy="164" r="3" fill="none" stroke="#eee" stroke-width="1.2"/>
<rect x="65" y="156.3" width="209.6" height="15.4" fill="#9b9b9b"/>
<path d="M69,161 L72,157.6 H84 V167.5 L81,171 H69 Z" fill="#e0e3e8" stroke="#222" stroke-width="1.1"/><path d="M81,161 L84,157.6 V167.5 L81,171 Z" fill="#c8ccd4"/><path d="M69,161 H81 V171" fill="none" stroke="#fff" stroke-width="0.8"/>
<text x="98.2" y="169.2" font-size="12" fill="#ffffff" font-weight="bold" text-anchor="start" textLength="169.5" lengthAdjust="spacingAndGlyphs" >3D Modelling/Printing Keycap ...</text>
<circle cx="285.6" cy="164.4" r="6.3" fill="#fff" stroke="#222" stroke-width="1.2"/><circle cx="285.6" cy="164.4" r="2.6" fill="#222"/>
<path d="M40.5,182.5 L49.0,188.5 L40.5,194.5 Z" fill="#f8f8f8" stroke="#333" stroke-width="1.1" stroke-linejoin="round"/>
<rect x="66.7" y="180.7" width="3.6" height="4" fill="#7a7a7a" transform="rotate(0 68.5 188)"/><rect x="66.7" y="180.7" width="3.6" height="4" fill="#7a7a7a" transform="rotate(45 68.5 188)"/><rect x="66.7" y="180.7" width="3.6" height="4" fill="#7a7a7a" transform="rotate(90 68.5 188)"/><rect x="66.7" y="180.7" width="3.6" height="4" fill="#7a7a7a" transform="rotate(135 68.5 188)"/><rect x="66.7" y="180.7" width="3.6" height="4" fill="#7a7a7a" transform="rotate(180 68.5 188)"/><rect x="66.7" y="180.7" width="3.6" height="4" fill="#7a7a7a" transform="rotate(225 68.5 188)"/><rect x="66.7" y="180.7" width="3.6" height="4" fill="#7a7a7a" transform="rotate(270 68.5 188)"/><rect x="66.7" y="180.7" width="3.6" height="4" fill="#7a7a7a" transform="rotate(315 68.5 188)"/><circle cx="68.5" cy="188" r="5.2" fill="#7a7a7a"/><circle cx="68.5" cy="188" r="2" fill="#eee"/>
<text x="91.3" y="191.8" font-size="11.8" fill="#333" font-weight="normal" text-anchor="start" textLength="89.5" lengthAdjust="spacingAndGlyphs" >Document Settings</text>
<path d="M40.5,206.5 L49.0,212.5 L40.5,218.5 Z" fill="#f8f8f8" stroke="#333" stroke-width="1.1" stroke-linejoin="round"/>
<path d="M61,207.5 V218.5 H77 V208.5 H69 L68,207.0 H61 Z" fill="#8c8c8c"/><path d="M61,205.5 H67 V206.7 H61 Z" fill="#8c8c8c"/>
<text x="91.3" y="215.8" font-size="11.8" fill="#333" font-weight="normal" text-anchor="start" textLength="68" lengthAdjust="spacingAndGlyphs" >Named Views</text>
<path d="M40.5,230.5 L49.0,236.5 L40.5,242.5 Z" fill="#f8f8f8" stroke="#333" stroke-width="1.1" stroke-linejoin="round"/>
<path d="M61.5,236.3 Q69,227.8 76.5,236.3 Q69,244.8 61.5,236.3 Z" fill="none" stroke="#a8a8a8" stroke-width="1"/><circle cx="69" cy="236.3" r="2.8" fill="none" stroke="#a8a8a8" stroke-width="1"/><path d="M64,230.8 L74,241.8" stroke="#a8a8a8" stroke-width="1"/>
<path d="M86,231.5 V242.5 H102 V232.5 H94 L93,231.0 H86 Z" fill="#8c8c8c"/><path d="M86,229.5 H92 V230.7 H86 Z" fill="#8c8c8c"/>
<text x="116.3" y="239.8" font-size="11.8" fill="#333" font-weight="normal" text-anchor="start" textLength="27.8" lengthAdjust="spacingAndGlyphs" >Origin</text>
<path d="M39,265.5 L50,254 V265.5 Z" fill="url(#tri)" stroke="#222" stroke-width="1.1" stroke-linejoin="round"/>
<path d="M61,260.3 Q69,251.3 77,260.3 Q69,269.3 61,260.3 Z" fill="#8f8f8f"/><circle cx="69" cy="260.3" r="3" fill="none" stroke="#eee" stroke-width="1.2"/>
<path d="M86,255.5 V266.5 H102 V256.5 H94 L93,255.0 H86 Z" fill="#8c8c8c"/><path d="M86,253.5 H92 V254.7 H86 Z" fill="#8c8c8c"/>
<text x="116.3" y="263.8" font-size="11.8" fill="#333" font-weight="normal" text-anchor="start" textLength="44.5" lengthAdjust="spacingAndGlyphs" >Sketches</text>
<path d="M79.2,284.3 Q87.2,275.3 95.2,284.3 Q87.2,293.3 79.2,284.3 Z" fill="#8f8f8f"/><circle cx="87.2" cy="284.3" r="3" fill="none" stroke="#eee" stroke-width="1.2"/>
<rect x="105" y="278" width="13.5" height="13" fill="none" stroke="#555" stroke-width="1" stroke-dasharray="2,1.5"/>
<rect x="104" y="277" width="2" height="2" fill="#1a8de0"/>
<rect x="117.5" y="277" width="2" height="2" fill="#1a8de0"/>
<rect x="104" y="290" width="2" height="2" fill="#1a8de0"/>
<path d="M113,292 L119,286" stroke="#f2b233" stroke-width="2.4"/><path d="M118.5,286.5 L120,285" stroke="#e33" stroke-width="2.4"/>
<text x="134" y="287.8" font-size="11.8" fill="#333" font-weight="normal" text-anchor="start" textLength="98" lengthAdjust="spacingAndGlyphs" >3D Keycap Project 5</text>
<rect x="4.5" y="933" width="299" height="24.5" fill="#f2f2f2" stroke="#c6c6c6" stroke-width="1"/>
<text x="29" y="949.2" font-size="11.5" fill="#555" font-weight="normal" text-anchor="start" textLength="57.5" lengthAdjust="spacingAndGlyphs" >COMMENTS</text>
<circle cx="287.5" cy="945.5" r="5" fill="#1e1e1e"/><path d="M284.7,945.5 H290.3 M287.5,942.7 V948.3" stroke="#fff" stroke-width="1.3"/>
<rect x="0" y="962" width="1919" height="49" fill="#f2f2f2"/><rect x="0" y="961.6" width="1919" height="1" fill="#e2e2e2"/>
<rect x="10.8" y="980.8" width="2" height="12" fill="#5f5f5f"/><path d="M22.2,980.8 V992.8 L13,986.8 Z" fill="#5f5f5f"/>
<path d="M45.5,980.8 V992.8 L35.3,986.8 Z" fill="#5f5f5f"/><rect x="46.5" y="984.8" width="1.8" height="4" fill="#5f5f5f"/>
<path d="M60.8,979 V993 L72.8,986 Z" fill="#5f5f5f"/>
<rect x="84.7" y="984.8" width="1.8" height="4" fill="#5f5f5f"/><path d="M87.5,980.8 V992.8 L97.5,986.8 Z" fill="#5f5f5f"/>
<path d="M110.8,980.8 V992.8 L120,986.8 Z" fill="#5f5f5f"/><rect x="120.2" y="980.8" width="2" height="12" fill="#5f5f5f"/>
<path d="M146.5,978.7 H159.6 V986 M146.5,978.7 V992 H154.5" fill="none" stroke="#c4c4c4" stroke-width="1.5"/>
<rect x="145.4" y="977.6" width="2.2" height="2.2" rx="0.6" fill="#1a8de0"/>
<rect x="158.5" y="977.6" width="2.2" height="2.2" rx="0.6" fill="#1a8de0"/>
<rect x="145.4" y="990.9" width="2.2" height="2.2" rx="0.6" fill="#1a8de0"/>
<rect x="149.0" y="981.1999999999999" width="2.2" height="2.2" rx="0.6" fill="#1a8de0"/>
<rect x="155.3" y="981.1999999999999" width="2.2" height="2.2" rx="0.6" fill="#1a8de0"/>
<rect x="149.0" y="987.5" width="2.2" height="2.2" rx="0.6" fill="#1a8de0"/>
<path d="M151.3,982.3 H155.3 M150.1,983.5 V987.4 M156.4,983.6 Q155.8,987.5 151.5,988.6" fill="none" stroke="#999" stroke-width="0.8"/>
<path d="M155,992.2 L159.6,987.8" stroke="#f2b233" stroke-width="2.4"/><path d="M159.2,988.2 L160.6,986.8" stroke="#e33" stroke-width="2.6"/><path d="M154.2,993 L155.6,991.6" stroke="#555" stroke-width="1.3"/>
<rect x="154.3" y="997.2" width="1.9" height="6.5" fill="#cfcfcf"/>
<path d="M159.7,972 H172 V975 L167,981 V1004 H165 V981 L159.7,975 Z" fill="#5f5f5f"/>
<rect x="1896.9" y="978.9" width="3.2" height="4" fill="#7b7b7b" transform="rotate(0 1898.5 986.5)"/><rect x="1896.9" y="978.9" width="3.2" height="4" fill="#7b7b7b" transform="rotate(45 1898.5 986.5)"/><rect x="1896.9" y="978.9" width="3.2" height="4" fill="#7b7b7b" transform="rotate(90 1898.5 986.5)"/><rect x="1896.9" y="978.9" width="3.2" height="4" fill="#7b7b7b" transform="rotate(135 1898.5 986.5)"/><rect x="1896.9" y="978.9" width="3.2" height="4" fill="#7b7b7b" transform="rotate(180 1898.5 986.5)"/><rect x="1896.9" y="978.9" width="3.2" height="4" fill="#7b7b7b" transform="rotate(225 1898.5 986.5)"/><rect x="1896.9" y="978.9" width="3.2" height="4" fill="#7b7b7b" transform="rotate(270 1898.5 986.5)"/><rect x="1896.9" y="978.9" width="3.2" height="4" fill="#7b7b7b" transform="rotate(315 1898.5 986.5)"/><circle cx="1898.5" cy="986.5" r="5.4" fill="#7b7b7b"/><circle cx="1898.5" cy="986.5" r="2.3" fill="#f2f2f2"/>
<defs><filter id="glow" x="-50%" y="-50%" width="200%" height="200%"><feGaussianBlur stdDeviation="4"/></filter></defs><rect x="1826" y="153" width="61" height="61" fill="#ffffff" fill-opacity="0.85" filter="url(#glow)"/>
<rect x="1830.5" y="157.5" width="52" height="52" fill="#efefef" stroke="#7a7a7a" stroke-width="1"/>
<rect x="1840.5" y="167.3" width="32.5" height="32.5" fill="#e5e7ea"/>
<text x="1856.7" y="189" font-size="16" fill="#8b8e93" font-weight="bold" text-anchor="middle" textLength="22" lengthAdjust="spacingAndGlyphs" >TOP</text>
<text x="1835.2" y="156.3" font-size="16.5" fill="#7fe67f" font-weight="bold" text-anchor="middle" textLength="7.5" lengthAdjust="spacingAndGlyphs" >Y</text>
<rect x="1834.3" y="156" width="1.4" height="1.8" fill="#80e880"/>
<text x="1891" y="210.8" font-size="15.5" fill="#f77b7b" font-weight="normal" text-anchor="middle" textLength="7" lengthAdjust="spacingAndGlyphs" >X</text>
<rect x="1883" y="205" width="2" height="1.4" fill="#f77b7b"/>
<text x="1827.8" y="217.9" font-size="15.5" fill="#7777f7" font-weight="bold" text-anchor="middle" textLength="8" lengthAdjust="spacingAndGlyphs" >Z</text>
<rect x="1894" y="244" width="22.5" height="182" fill="#efefef"/>
<path d="M1899,255.5 L1904,252.3 V258.7 Z M1903.5,255.5 L1908.5,252.3 V258.7 Z" fill="#333"/>
<text x="0" y="0" font-size="12" fill="#333" font-weight="normal" text-anchor="middle" textLength="90" lengthAdjust="spacingAndGlyphs" transform="translate(1910.7,369) rotate(-90)">SKETCH PALETTE</text>
<rect x="842" y="931.8" width="237" height="24" fill="#efefef"/>
<path d="M853.5,936 V951.5" stroke="#444" stroke-width="3.4"/><path d="M853.5,936.2 V951.2" stroke="#fff" stroke-width="1.6"/><path d="M850,940.5 L853.5,935.8 L857,940.5" fill="#fff" stroke="#444" stroke-width="1"/>
<path d="M846,944.5 Q848,941 856,942 Q861,943 860,945 Q858.5,947 850,946.5" fill="none" stroke="#222" stroke-width="1.1"/><path d="M847.5,946.5 L851,944.3 V949 Z" fill="#222"/>
<path d="M866,942.5 H872 L869,946.0 Z" fill="#222"/>
<rect x="878.5" y="941.5" width="15.5" height="10" rx="1" fill="#f4f4f4" stroke="#444" stroke-width="1.3"/><rect x="881.5" y="944.5" width="9.5" height="4" fill="#a8b4c4" stroke="#444" stroke-width="0.9"/><path d="M879.5,941 L884,936.5 V939.5 L890,937.5 V941" fill="#ddd" stroke="#444" stroke-width="0.8"/>
<path d="M907.8,951.8 L904.3,946 Q903.3,944 905.3,943.7 L907.6,945.6 V938.8 Q907.6,937.3 908.9,937.3 Q910.2,937.3 910.2,938.8 V943.2 V937.3 Q910.2,935.9 911.5,935.9 Q912.8,935.9 912.8,937.3 V943.2 V937.8 Q912.8,936.4 914.1,936.4 Q915.4,936.4 915.4,937.8 V943.6 V939.8 Q915.4,938.5 916.8,938.5 Q918.2,938.5 918.2,939.8 V946 Q918,950 916,951.8 Z" fill="#eef0f3" stroke="#333" stroke-width="0.95" stroke-linejoin="round"/>
<circle cx="936.5" cy="942.5" r="4.3" fill="#dde8ee" stroke="#333" stroke-width="1.2"/><path d="M939.5,945.5 L942.5,949" stroke="#333" stroke-width="2.2"/><path d="M941.5,937.5 H945.5 M943.5,935.5 V939.5 M941.5,942 H945.5" stroke="#333" stroke-width="0.9"/>
<circle cx="962.5" cy="942.5" r="5.5" fill="#dde8ee" stroke="#333" stroke-width="1.2"/><path d="M966.5,946.5 L970.5,950.5" stroke="#333" stroke-width="2.2"/><rect x="956.5" y="936" width="15" height="15.5" fill="none" stroke="#555" stroke-width="0.8" stroke-dasharray="1.5,1.5"/>
<path d="M977,942.5 H983 L980,946.0 Z" fill="#222"/>
<rect x="989.5" y="936.5" width="15.5" height="12" rx="1" fill="#fff" stroke="#444" stroke-width="1.1"/><rect x="991.5" y="938.5" width="11.5" height="8" fill="#9db8dd" stroke="#2d4a80" stroke-width="0.9"/><path d="M994.5,949.5 H1000 L1001,951.5 H993.5 Z" fill="#fff" stroke="#444" stroke-width="0.8"/>
<path d="M1007,942.5 H1013 L1010,946.0 Z" fill="#222"/>
<rect x="1020.5" y="936.5" width="15.5" height="15" rx="1.2" fill="#8a8e95" stroke="#444" stroke-width="0.9"/>
<rect x="1022" y="938" width="1.7" height="1.7" fill="#fff"/>
<rect x="1022" y="941" width="1.7" height="1.7" fill="#fff"/>
<rect x="1022" y="944" width="1.7" height="1.7" fill="#fff"/>
<rect x="1022" y="947" width="1.7" height="1.7" fill="#fff"/>
<rect x="1022" y="950" width="1.7" height="1.7" fill="#fff"/>
<rect x="1025" y="938" width="1.7" height="1.7" fill="#fff"/>
<rect x="1025" y="941" width="1.7" height="1.7" fill="#fff"/>
<rect x="1025" y="944" width="1.7" height="1.7" fill="#fff"/>
<rect x="1025" y="947" width="1.7" height="1.7" fill="#fff"/>
<rect x="1025" y="950" width="1.7" height="1.7" fill="#fff"/>
<rect x="1028" y="938" width="1.7" height="1.7" fill="#fff"/>
<rect x="1028" y="941" width="1.7" height="1.7" fill="#fff"/>
<rect x="1028" y="944" width="1.7" height="1.7" fill="#fff"/>
<rect x="1028" y="947" width="1.7" height="1.7" fill="#fff"/>
<rect x="1028" y="950" width="1.7" height="1.7" fill="#fff"/>
<rect x="1031" y="938" width="1.7" height="1.7" fill="#fff"/>
<rect x="1031" y="941" width="1.7" height="1.7" fill="#fff"/>
<rect x="1031" y="944" width="1.7" height="1.7" fill="#fff"/>
<rect x="1031" y="947" width="1.7" height="1.7" fill="#fff"/>
<rect x="1031" y="950" width="1.7" height="1.7" fill="#fff"/>
<rect x="1034" y="938" width="1.7" height="1.7" fill="#fff"/>
<rect x="1034" y="941" width="1.7" height="1.7" fill="#fff"/>
<rect x="1034" y="944" width="1.7" height="1.7" fill="#fff"/>
<rect x="1034" y="947" width="1.7" height="1.7" fill="#fff"/>
<rect x="1034" y="950" width="1.7" height="1.7" fill="#fff"/>
<path d="M1038,942.5 H1044 L1041,946.0 Z" fill="#222"/>
<rect x="1051.5" y="937" width="14.5" height="14" rx="1.2" fill="#2d4f8c"/>
<rect x="1052.5" y="938" width="5.5" height="5.5" fill="#9ebce0"/>
<rect x="1059.5" y="938" width="5.5" height="5.5" fill="#9ebce0"/>
<rect x="1052.5" y="945" width="5.5" height="5.5" fill="#9ebce0"/>
<rect x="1059.5" y="945" width="5.5" height="5.5" fill="#9ebce0"/>
<path d="M1069,942.5 H1075 L1072,946.0 Z" fill="#222"/>
<path d="M1907,945.4 V951.8 Q1907,952.8 1906,952.8 H1899.6 A7.4,7.4 0 1 1 1907,945.4 Z" fill="#000"/>
<path d="M1894.5,949.5 L1904.5,942.5 M1896.5,950 L1905,944.5 M1899.5,950 L1905,946.5 M1896,946.5 L1901,950 M1898,944.8 L1903.5,948.5 M1900.5,943.5 L1905,946.8" stroke="#bbb" stroke-width="0.8"/></svg>
</body></html>
